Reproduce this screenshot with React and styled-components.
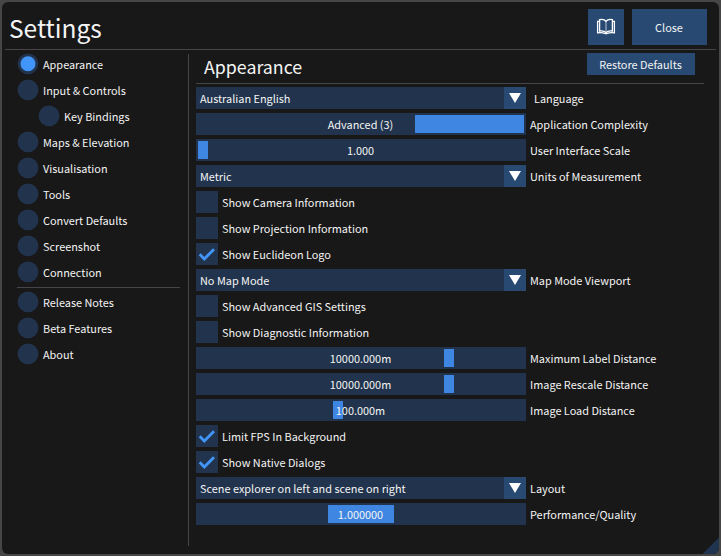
import React from "react";
import styled, { createGlobalStyle } from "styled-components";

const color = {
  window: "#181818",
  edge: "#464646",
  line: "#464649",
  frame: "#22344d",
  button: "#284a72",
  grab: "#3f86e2",
  mark: "#4296fa",
  text: "#f4f4f4",
};

const GlobalStyle = createGlobalStyle`
  * { box-sizing: border-box; }
  body {
    margin: 0;
    background: ${color.edge};
    color: ${color.text};
    font-family: "Noto Sans CJK SC", "Noto Sans", sans-serif;
    font-size: 10.9px;
    line-height: 22px;
    overflow: hidden;
  }
`;

const Window = styled.main`
  position: relative;
  display: flex;
  flex-direction: column;
  width: 717px;
  height: 552px;
  margin: 2px;
  border-radius: 6px;
  overflow: hidden;
  background: ${color.window};
`;

const Header = styled.header`
  display: flex;
  align-items: flex-start;
  gap: 8px;
  height: 48px;
  margin: 0 3px;
  padding: 7px 9px 0 4px;
  border-bottom: 1px solid ${color.line};
`;

const Title = styled.h1`
  flex: 1;
  margin: 0;
  font-size: 24.5px;
  font-weight: 400;
  line-height: 37px;
  white-space: nowrap;
`;

const Button = styled.button`
  display: flex;
  align-items: center;
  justify-content: center;
  width: ${(p) => p.$width}px;
  height: ${(p) => p.$height}px;
  padding: 0 1px 0 0;
  border: 0;
  background: ${color.button};
  color: inherit;
  font: inherit;
  white-space: nowrap;
`;

const Body = styled.div`
  display: flex;
  flex: 1;
  padding: 4px 15px 8px 15px;
`;

const Sidebar = styled.nav`
  width: 172px;
  border-right: 1px solid ${color.line};
`;

const NavList = styled.div`
  display: flex;
  flex-direction: column;
  gap: 4px;
  margin-top: -1px;
`;

const NavItem = styled.div`
  display: flex;
  gap: 4px;
  height: 22px;
  padding-left: ${(p) => (p.$nested ? 21 : 0)}px;
`;

const RadioMark = styled.svg`
  display: block;
  flex: none;
  width: 22px;
  height: 22px;
`;

const Label = styled.span`
  white-space: nowrap;
  margin-left: ${(p) => p.$indent || 0}px;
`;

const Divider = styled.hr`
  width: 163px;
  height: 1px;
  margin: 0 0 -1px;
  border: 0;
  background: ${color.line};
`;

const Panel = styled.section`
  display: flex;
  flex-direction: column;
  gap: 4px;
  width: 508px;
  margin-left: 7px;
`;

const PanelHeader = styled.div`
  display: flex;
  justify-content: space-between;
  height: 31px;
  margin-top: -1px;
  margin-bottom: -1px;
  padding: 0 9px 0 8px;
  border-bottom: 1px solid ${color.line};
`;

const PanelTitle = styled.h2`
  margin: 0;
  font-size: 17.8px;
  font-weight: 400;
  line-height: 26px;
  white-space: nowrap;
`;

const SettingRow = styled.div`
  display: flex;
  gap: 4px;
  height: 22px;
`;

const Field = styled.div`
  position: relative;
  display: flex;
  justify-content: ${(p) => (p.$centered ? "center" : "space-between")};
  width: 330px;
  height: 22px;
  padding-left: ${(p) => (p.$centered ? 0 : 4)}px;
  padding-right: ${(p) => (p.$centered ? 1 : 0)}px;
  background: ${color.frame};
`;

const Grab = styled.span`
  position: absolute;
  top: 2px;
  left: ${(p) => p.$left}px;
  width: ${(p) => p.$width}px;
  height: 18px;
  background: ${color.grab};
`;

const Value = styled(Label)`
  position: relative;
`;

const ArrowBox = styled.span`
  width: 22px;
  height: 22px;
  background: ${color.button};
  svg { display: block; }
`;

const CheckBox = styled.span`
  width: 22px;
  height: 22px;
  background: ${color.frame};
  svg { display: block; }
`;

const ResizeGrip = styled.span`
  position: absolute;
  right: 0;
  bottom: 0;
  width: 16px;
  height: 16px;
  background: linear-gradient(135deg, transparent 50%, #21344f 50%);
`;

const Radio = ({ selected }) => (
  <RadioMark viewBox="0 0 22 22">
    <circle cx="11" cy="10.8" r="10.4" fill={color.frame} />
    {selected && <circle cx="11" cy="10.8" r="7.5" fill={color.mark} />}
  </RadioMark>
);

const BookIcon = () => (
  <svg width="20" height="18" viewBox="0 0 20 18" fill="none" stroke="#fff">
    <path d="M10 3.2C8.5 1.5 5.5 1.2 3.6 1.7V13c2.3-.4 5 0 6.4 1.6C11.4 13 14.1 12.6 16.4 13V1.7C14.5 1.2 11.5 1.5 10 3.2Z" strokeWidth="1.3" />
    <path d="M10 3.2v11.3" strokeWidth="1" opacity=".7" />
    <path d="M3.5 3.4H1.6v11.4c3-.3 5.5-.2 7.4.7h2c1.900-.9 4.400-1 7.400-.7V3.400h-1.900" strokeWidth="1.3" />
  </svg>
);

const Arrow = () => (
  <ArrowBox>
    <svg width="22" height="22">
      <path d="M5 6h12l-6 10z" fill="#fff" />
    </svg>
  </ArrowBox>
);

const Check = () => (
  <svg width="22" height="22">
    <path d="M3.700 11.300l4.600 4.600 9.700-9.700" fill="none" stroke={color.mark} strokeWidth="2.800" />
  </svg>
);

const mainSections = [
  { text: "Appearance", selected: true },
  { text: "Input & Controls" },
  { text: "Key Bindings", nested: true },
  { text: "Maps & Elevation" },
  { text: "Visualisation" },
  { text: "Tools" },
  { text: "Convert Defaults" },
  { text: "Screenshot" },
  { text: "Connection" },
];

const infoSections = [
  { text: "Release Notes" },
  { text: "Beta Features" },
  { text: "About" },
];

const settings = [
  { kind: "select", value: "Australian English", label: "Language", indent: 4 },
  { kind: "slider", value: "Advanced (3)", label: "Application Complexity", left: 219, width: 109 },
  { kind: "slider", value: "1.000", label: "User Interface Scale", left: 2, width: 10 },
  { kind: "select", value: "Metric", label: "Units of Measurement" },
  { kind: "check", label: "Show Camera Information" },
  { kind: "check", label: "Show Projection Information" },
  { kind: "check", label: "Show Euclideon Logo", checked: true },
  { kind: "select", value: "No Map Mode", label: "Map Mode Viewport" },
  { kind: "check", label: "Show Advanced GIS Settings" },
  { kind: "check", label: "Show Diagnostic Information" },
  { kind: "slider", value: "10000.000m", label: "Maximum Label Distance", left: 248, width: 10 },
  { kind: "slider", value: "10000.000m", label: "Image Rescale Distance", left: 248, width: 10 },
  { kind: "slider", value: "100.000m", label: "Image Load Distance", left: 137, width: 10 },
  { kind: "check", label: "Limit FPS In Background", checked: true },
  { kind: "check", label: "Show Native Dialogs", checked: true },
  { kind: "select", value: "Scene explorer on left and scene on right", label: "Layout" },
  { kind: "slider", value: "1.000000", label: "Performance/Quality", left: 132, width: 66 },
];

const NavEntry = ({ text, nested, selected }) => (
  <NavItem $nested={nested}>
    <Radio selected={selected} />
    <Label>{text}</Label>
  </NavItem>
);

const Setting = ({ kind, value, label, left, width, checked, indent }) => (
  <SettingRow>
    {kind === "check" && <CheckBox>{checked && <Check />}</CheckBox>}
    {kind === "select" && (
      <Field>
        <Label>{value}</Label>
        <Arrow />
      </Field>
    )}
    {kind === "slider" && (
      <Field $centered>
        <Grab $left={left} $width={width} />
        <Value>{value}</Value>
      </Field>
    )}
    <Label $indent={indent}>{label}</Label>
  </SettingRow>
);

export default function App() {
  return (
    <>
      <GlobalStyle />
      <Window>
        <Header>
          <Title>Settings</Title>
          <Button $width={36} $height={36} aria-label="Documentation"><BookIcon /></Button>
          <Button $width={75} $height={36}>Close</Button>
        </Header>
        <Body>
          <Sidebar>
            <NavList>
              {mainSections.map((s) => <NavEntry key={s.text} {...s} />)}
              <Divider />
              {infoSections.map((s) => <NavEntry key={s.text} {...s} />)}
            </NavList>
          </Sidebar>
          <Panel>
            <PanelHeader>
              <PanelTitle>Appearance</PanelTitle>
              <Button $width={108} $height={22}>Restore Defaults</Button>
            </PanelHeader>
            {settings.map((s) => <Setting key={s.label} {...s} />)}
          </Panel>
        </Body>
        <ResizeGrip />
      </Window>
    </>
  );
}
